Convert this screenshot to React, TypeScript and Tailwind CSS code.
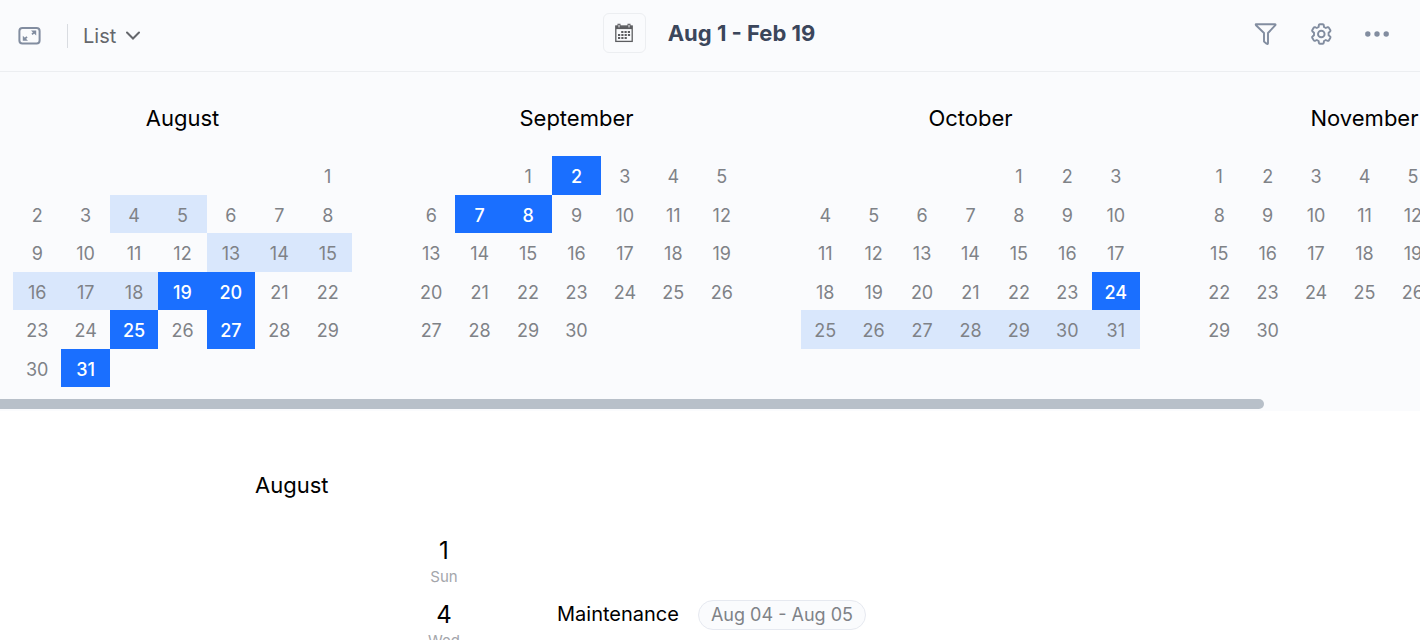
import React, { useState } from "react";
import { clsx } from "clsx";

type MonthData = {
    name: string;
    offset: number;
    days: number;
    busy: number[];
    light: number[];
};

type Entry = {
    day: number;
    weekday: string;
    title?: string;
    range?: string;
};

const months: MonthData[] = [
    { name: "August", offset: 6, days: 31, busy: [19, 20, 25, 27, 31], light: [4, 5, 13, 14, 15, 16, 17, 18] },
    { name: "September", offset: 2, days: 30, busy: [2, 7, 8], light: [] },
    { name: "October", offset: 4, days: 31, busy: [24], light: [25, 26, 27, 28, 29, 30, 31] },
    { name: "November", offset: 0, days: 30, busy: [], light: [] },
];

const entries: Entry[] = [
    { day: 1, weekday: "Sun" },
    { day: 4, weekday: "Wed", title: "Maintenance", range: "Aug 04 - Aug 05" },
];

function ExpandIcon() {
    return (
        <svg width="24" height="20" viewBox="0 0 24 20" fill="none" stroke="currentColor" strokeWidth="2">
            <rect x="2.4" y="2" width="20.2" height="15.4" rx="3" />
            <path d="M15 8.4 L18 5.6 M10 10.8 L7.2 13.4" strokeWidth="1.8" />
            <path d="M14 4.6 H19.2 V9.6 Z M5.8 9.8 V14.8 H11 Z" fill="currentColor" stroke="none" />
        </svg>
    );
}

function CalendarIcon() {
    return (
        <svg width="18" height="20" viewBox="0 0 18 20" fill="none" stroke="currentColor">
            <rect x="0.8" y="3" width="16.4" height="15.4" strokeWidth="1.3" />
            <path d="M0.8 4.6 H17.2" strokeWidth="3" />
            <path d="M4 0.8 V5 M14 0.8 V5" strokeWidth="3" />
            <path d="M4 1.8 V4.4 M14 1.8 V4.4" stroke="#fafbfd" strokeWidth="1" />
            <path d="M6.2 9 H15.4 M3 12 H15.4 M3 15 H12.2" strokeWidth="2.1" strokeDasharray="2.2 1.1" />
        </svg>
    );
}

function FilterIcon() {
    return (
        <svg width="24" height="24" viewBox="0 0 24 24" fill="none" stroke="currentColor" strokeWidth="1.9" strokeLinejoin="round">
            <path d="M3 2.2 H22 Q22.8 2.2 22.4 3.2 L15 11 V21 Q15 22.6 13.6 21.8 L11 19.6 V11 L3 3.2 Q2.4 2.2 3 2.2 Z" />
        </svg>
    );
}

function GearIcon() {
    return (
        <svg width="24" height="24" viewBox="0 0 24 24" fill="none" stroke="currentColor" strokeWidth="1.9" strokeLinejoin="round">
            <path d="M9.9 3 Q10 2.2 10.8 2.2 H13.8 Q14.6 2.2 14.7 3 L15 5 L16.8 6 L18.6 5.2 Q19.4 4.9 19.8 5.6 L21.4 8.3 Q21.8 9 21.1 9.5 L19.6 10.8 V13.2 L21.1 14.5 Q21.8 15 21.4 15.7 L19.8 18.4 Q19.4 19.1 18.6 18.8 L16.8 18 L15 19 L14.7 21 Q14.6 21.8 13.8 21.8 H10.8 Q10 21.8 9.9 21 L9.6 19 L7.8 18 L6 18.8 Q5.2 19.1 4.8 18.4 L3.2 15.7 Q2.8 15 3.5 14.5 L5 13.2 V10.8 L3.5 9.5 Q2.8 9 3.2 8.3 L4.8 5.6 Q5.2 4.9 6 5.2 L7.8 6 L9.6 5 Z" />
            <circle cx="12.3" cy="12" r="3.3" />
        </svg>
    );
}

function DotsIcon() {
    return (
        <svg width="24" height="24" viewBox="0 0 24 24" fill="currentColor">
            <circle cx="2.8" cy="12" r="2.7" />
            <circle cx="12" cy="12" r="2.7" />
            <circle cx="21.2" cy="12" r="2.7" />
        </svg>
    );
}

function Toolbar() {
    return (
        <header className="grid h-[72px] grid-cols-3 items-center border-b border-[#eceef1] text-[#828da0]">
            <div className="flex items-center pl-[17px]">
                <button type="button" aria-label="Full screen">
                    <ExpandIcon />
                </button>
                <span className="ml-[26px] h-6 w-px bg-[#d9dce1]" />
                <button type="button" className="ml-[15px] flex items-center gap-2.5 text-xl text-[#65676c]">
                    List
                    <svg width="14" height="10" viewBox="0 0 14 10" fill="none" stroke="currentColor" strokeWidth="2">
                        <path d="M1 1.5 L7 7.5 L13 1.5" strokeLinecap="round" />
                    </svg>
                </button>
            </div>
            <div className="flex items-center justify-center gap-[22px] pr-0.5 pb-[5px]">
                <button
                    type="button"
                    aria-label="Pick dates"
                    className="flex h-10 w-[43px] items-center justify-center rounded-md border border-[#eceef1] text-[#5c5d60]"
                >
                    <CalendarIcon />
                </button>
                <h1 className="text-[22px] font-bold text-[#3b465b]">Aug 1 - Feb 19</h1>
            </div>
            <div className="flex items-center justify-end gap-8 pr-[31px] pb-[3px]">
                <button type="button" aria-label="Filter">
                    <FilterIcon />
                </button>
                <button type="button" aria-label="Settings">
                    <GearIcon />
                </button>
                <button type="button" aria-label="More">
                    <DotsIcon />
                </button>
            </div>
        </header>
    );
}

function Month({ month }: { month: MonthData }) {
    // always six weeks, so that every month has the same height
    const weeks = Array.from({ length: 6 }, (_, w) =>
        Array.from({ length: 7 }, (_, d) => {
            const day = w * 7 + d + 1 - month.offset;
            return day > 0 && day <= month.days ? day : null;
        })
    );

    return (
        <table className="w-[339px] shrink-0 table-fixed border-collapse">
            <caption className="pb-[22px] text-[22px] leading-8 text-black">{month.name}</caption>
            <tbody>
                {weeks.map((week, w) => (
                    <tr key={w} className="odd:h-[39px] even:h-[38px]">
                        {week.map((day, d) => (
                            <td
                                key={d}
                                className={clsx(
                                    "p-0 pt-[3px] text-center text-lg leading-6",
                                    day && month.busy.includes(day)
                                        ? "bg-[#1a6fff] font-medium text-white"
                                        : day && month.light.includes(day)
                                          ? "bg-[#d9e7fc] text-[#7f8287]"
                                          : "text-[#7f8287]"
                                )}
                            >
                                {day}
                            </td>
                        ))}
                    </tr>
                ))}
            </tbody>
        </table>
    );
}

export default function App() {
    const [visible] = useState<MonthData[]>(months);

    return (
        <div className="h-screen overflow-hidden bg-white font-['Inter',sans-serif]">
            <div className="bg-[#fafbfd]">
                <Toolbar />

                {/* Month strip */}
                <div className="flex gap-[55px] overflow-hidden pt-[30px] pl-[13px]">
                    {visible.map((month) => (
                        <Month key={month.name} month={month} />
                    ))}
                </div>
                <div className="pt-3 pb-0.5">
                    <div className="h-2.5 w-[89%] rounded-r-full bg-[#b8c0c9]" />
                </div>
            </div>

            {/* Agenda */}
            <section className="pt-[58px]">
                <h2 className="pl-[255px] text-[22px] leading-8 text-black">August</h2>
                <ul className="pt-[35px]">
                    {entries.map((entry) => (
                        <li key={entry.day} className="flex h-16 items-start pl-[414px]">
                            <div className="w-[60px] pt-px text-center">
                                <div className="text-2xl leading-7 text-black">{entry.day}</div>
                                <div className="text-[15px] leading-6 text-[#a4a6ab]">{entry.weekday}</div>
                            </div>
                            {entry.title && (
                                <div className="flex items-start gap-[19px] pl-[83px]">
                                    <span className="text-xl leading-7 text-black">{entry.title}</span>
                                    <span className="rounded-full border border-[#e6e9f0] bg-[#fafbfd] px-3 text-lg leading-7 text-[#7f8287]">
                                        {entry.range}
                                    </span>
                                </div>
                            )}
                        </li>
                    ))}
                </ul>
            </section>
        </div>
    );
}
